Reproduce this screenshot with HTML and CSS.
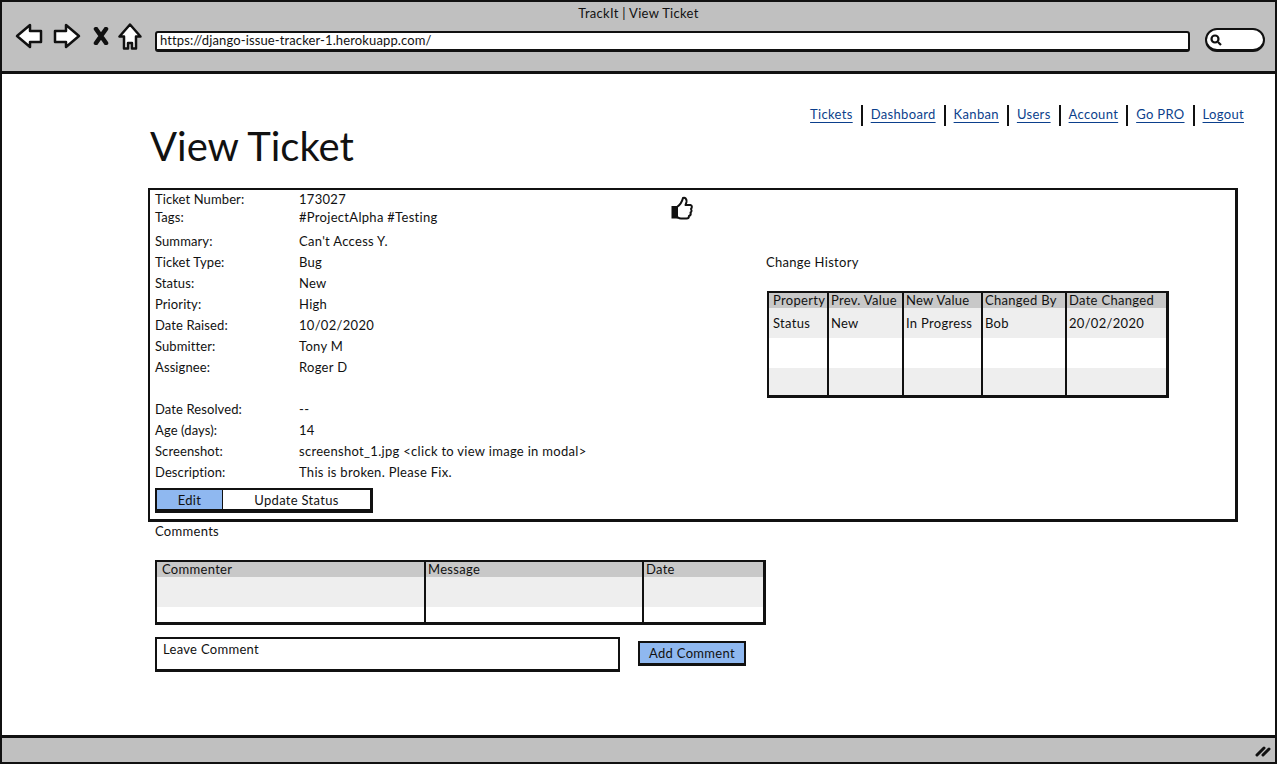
FILE: index.html
```html
<!doctype html>
<html lang="en">
    <head>
        <meta charset="UTF-8" />
        <title>TrackIt | View Ticket</title>
        <link rel="stylesheet" href="styles.css">
    </head>
    <body>
        <div class="window">
            <header class="chrome">
                <div class="chrome-title">TrackIt | View Ticket</div>
                <div class="chrome-bar">
                    <div class="chrome-icons">
                        <svg class="icon-back" viewBox="0 0 28 26"><path d="M2 13 L15 2 V8 H26 V19 H15 V24 Z" /></svg>
                        <svg class="icon-forward" viewBox="0 0 28 26"><path d="M26 13 L13 2 V8 H2 V19 H13 V24 Z" /></svg>
                        <svg class="icon-stop" viewBox="0 0 16 18"><path d="M3 2 L13 16 M13 2 L3 16" /></svg>
                        <svg class="icon-home" viewBox="0 0 24 27"><path d="M12 1.500 L1.500 13.500 H6 V25.500 H10 V20 H14 V25.500 H18 V13.500 H22.500 Z" /></svg>
                    </div>
                    <div class="url-box">https://django-issue-tracker-1.herokuapp.com/</div>
                    <div class="search-box">
                        <svg class="icon-search" viewBox="0 0 12 12"><circle cx="5" cy="5" r="3.500" /><line x1="8" y1="8" x2="11" y2="11" /></svg>
                    </div>
                </div>
            </header>

            <main class="page">
                <nav class="top-nav">
                    <a href="#">Tickets</a>
                    <a href="#">Dashboard</a>
                    <a href="#">Kanban</a>
                    <a href="#">Users</a>
                    <a href="#">Account</a>
                    <a href="#">Go PRO</a>
                    <a href="#">Logout</a>
                </nav>
                <h1>View Ticket</h1>

                <section class="ticket">
                    <div class="details">
                        <div class="row row-short"><span class="label">Ticket Number:</span><span>173027</span></div>
                        <div class="row row-tags"><span class="label">Tags:</span><span>#ProjectAlpha #Testing</span></div>
                        <div class="row"><span class="label">Summary:</span><span>Can't Access Y.</span></div>
                        <div class="row"><span class="label">Ticket Type:</span><span>Bug</span></div>
                        <div class="row"><span class="label">Status:</span><span>New</span></div>
                        <div class="row"><span class="label">Priority:</span><span>High</span></div>
                        <div class="row"><span class="label">Date Raised:</span><span>10/02/2020</span></div>
                        <div class="row"><span class="label">Submitter:</span><span>Tony M</span></div>
                        <div class="row row-gap"><span class="label">Assignee:</span><span>Roger D</span></div>
                        <div class="row"><span class="label">Date Resolved:</span><span>--</span></div>
                        <div class="row"><span class="label">Age (days):</span><span>14</span></div>
                        <div class="row"><span class="label">Screenshot:</span><span>screenshot_1.jpg &lt;click to view image in modal&gt;</span></div>
                        <div class="row"><span class="label">Description:</span><span>This is broken. Please Fix.</span></div>
                        <div class="btn-group">
                            <button class="btn-edit">Edit</button>
                            <button class="btn-status">Update Status</button>
                        </div>
                    </div>

                    <div class="like">
                        <svg viewBox="0 0 22 24">
                            <path class="thumb-cuff" d="M1.500 11 H6 V21.500 H1.500 Z" />
                            <path class="thumb-hand" d="M6 11 C9 9 11 6 12 2 C14 1 16 3 15.500 6 L14.500 9 H19.500 C21.500 9.500 21 12 20 13 C21 14.500 20.500 16 19.500 16.500 C20 18 19.500 19.500 18 20 C18 21.500 17 22.500 15.500 22.500 H10 C8 22.500 7 21.500 6 21 Z" />
                        </svg>
                    </div>

                    <div class="history">
                        <div class="history-title">Change History</div>
                        <table class="sketch-table history-table">
                            <colgroup>
                                <col class="h-col-1" /><col class="h-col-2" /><col class="h-col-3" /><col class="h-col-4" /><col />
                            </colgroup>
                            <thead>
                                <tr><th>Property</th><th>Prev. Value</th><th>New Value</th><th>Changed By</th><th>Date Changed</th></tr>
                            </thead>
                            <tbody>
                                <tr class="odd"><td>Status</td><td>New</td><td>In Progress</td><td>Bob</td><td>20/02/2020</td></tr>
                                <tr><td></td><td></td><td></td><td></td><td></td></tr>
                                <tr class="odd last"><td></td><td></td><td></td><td></td><td></td></tr>
                            </tbody>
                        </table>
                    </div>
                </section>

                <section class="comments">
                    <div class="comments-title">Comments</div>
                    <table class="sketch-table comments-table">
                        <colgroup>
                            <col class="c-col-1" /><col class="c-col-2" /><col />
                        </colgroup>
                        <thead>
                            <tr><th>Commenter</th><th>Message</th><th>Date</th></tr>
                        </thead>
                        <tbody>
                            <tr class="odd"><td></td><td></td><td></td></tr>
                            <tr class="last"><td></td><td></td><td></td></tr>
                        </tbody>
                    </table>
                    <div class="comment-form">
                        <div class="comment-input">Leave Comment</div>
                        <button class="btn-add">Add Comment</button>
                    </div>
                </section>
            </main>

            <footer class="status-bar">
                <svg class="icon-resize" viewBox="0 0 16 12"><path d="M2 10 L9 3 M8 10 L14 4" /></svg>
            </footer>
        </div>
    </body>
</html>
```

FILE: styles.css
```css
* {
    box-sizing: border-box;
}

body {
    margin: 0;
    background: white;
    color: #111;
    font-family: "Lato", "Liberation Sans", sans-serif;
    font-size: 13px;
    letter-spacing: 0.3px;
}

.window {
    display: flex;
    flex-direction: column;
    width: 1277px;
    height: 764px;
    border: 2px solid #111;
    overflow: hidden;
}

/* browser chrome */
.chrome {
    height: 72px;
    flex: none;
    background: #c0c0c0;
    border-bottom: 3px solid #111;
}

.chrome-title {
    height: 21px;
    padding-top: 3px;
    text-align: center;
    line-height: 17px;
}

.chrome-bar {
    display: flex;
    align-items: center;
    height: 26px;
    padding-left: 13px;
}

.chrome-icons {
    display: flex;
    align-items: center;
    width: 140px;
}

.chrome-icons svg {
    display: block;
    fill: white;
    stroke: #111;
    stroke-width: 2.500;
    stroke-linejoin: round;
}

.icon-back,
.icon-forward {
    width: 28px;
    height: 26px;
}

.icon-forward {
    margin-left: 10px;
}

.chrome-icons .icon-stop {
    width: 16px;
    height: 18px;
    margin-left: 12px;
    stroke-width: 4.500;
    stroke-linecap: round;
}

.icon-home {
    width: 24px;
    height: 27px;
    margin-left: 9px;
}

.url-box {
    width: 1035px;
    height: 21px;
    margin-top: 10px;
    padding-left: 3px;
    background: white;
    border: 2px solid #111;
    border-bottom-width: 3px;
    border-radius: 3px;
    line-height: 15px;
    letter-spacing: 0.12px;
}

.search-box {
    display: flex;
    align-items: center;
    width: 60px;
    height: 24px;
    margin-top: 8px;
    margin-left: 15px;
    padding-left: 3px;
    background: white;
    border: 2px solid #111;
    border-bottom-width: 3px;
    border-radius: 12px;
}

.icon-search {
    width: 12px;
    height: 12px;
    fill: none;
    stroke: #111;
    stroke-width: 2.200;
}

/* page content */
.page {
    flex: 1;
    padding: 31px 31px 0 146px;
}

.top-nav {
    display: flex;
    justify-content: flex-end;
    height: 21px;
    letter-spacing: 0.33px;
}

.top-nav a {
    display: block;
    padding: 0 8px;
    border-left: 2px solid #111;
    color: #0b3f8c;
    line-height: 19px;
    text-decoration: underline;
    text-underline-offset: 3px;
}

.top-nav a:first-child {
    border-left: none;
}

.top-nav a:last-child {
    padding-right: 0;
}

h1 {
    margin: 0;
    height: 62px;
    padding-left: 2px;
    font-size: 40px;
    font-weight: 400;
    line-height: 40px;
    letter-spacing: 0;
}

.ticket {
    display: flex;
    width: 1090px;
    height: 334px;
    padding: 1px 5px;
    border: 2px solid #111;
    border-bottom-width: 3px;
    border-right-width: 3px;
}

.details {
    width: 516px;
    flex: none;
}

.row {
    display: flex;
    height: 21px;
    line-height: 21px;
}

.row-short {
    height: 17px;
    line-height: 17px;
}

.row-tags {
    height: 23px;
    line-height: 19px;
}

.row-gap {
    height: 42px;
}

.label {
    width: 144px;
    flex: none;
    letter-spacing: 0.1px;
}

.btn-group {
    display: flex;
    width: 218px;
    height: 25px;
    margin-top: 5px;
    background: white;
    border: 2px solid #111;
    border-right-width: 3px;
    border-bottom-width: 4px;
}

button {
    padding: 0;
    border: none;
    color: #111;
    font-family: inherit;
    font-size: 13px;
    letter-spacing: inherit;
}

.btn-edit {
    width: 66px;
    background: #8fb8f0;
    border-right: 1px solid #111;
}

.btn-status {
    flex: 1;
    background: white;
}

.like {
    width: 95px;
    flex: none;
    padding-top: 5px;
}

.like svg {
    display: block;
    width: 22px;
    height: 24px;
}

.thumb-cuff {
    fill: #111;
    stroke: #111;
    stroke-width: 2;
}

.thumb-hand {
    fill: white;
    stroke: #111;
    stroke-width: 2;
    stroke-linejoin: round;
}

.history {
    padding-top: 61px;
}

.history-title {
    height: 20px;
    line-height: 20px;
}

.sketch-table {
    border-collapse: separate;
    border-spacing: 0;
    table-layout: fixed;
    border: 2px solid #111;
    border-right-width: 3px;
    border-bottom-width: 3px;
}

.sketch-table th {
    height: 15px;
    padding: 0 0 0 2px;
    background: #c8c8c8;
    font-weight: 400;
    line-height: 15px;
    text-align: left;
    overflow: hidden;
    white-space: nowrap;
}

.sketch-table td {
    height: 30px;
    padding: 0 0 0 2px;
    vertical-align: top;
    line-height: 30px;
    white-space: nowrap;
}

.sketch-table th + th,
.sketch-table td + td {
    border-left: 2px solid #111;
}

.sketch-table tr.odd td {
    background: #eeeeee;
}

.history-table {
    width: 402px;
    margin-top: 19px;
    margin-left: 1px;
}

.history-table th:first-child,
.history-table td:first-child {
    padding-left: 4px;
}

.history-table tr.last td {
    height: 27px;
}

.h-col-1 {
    width: 58px;
}

.h-col-2 {
    width: 75px;
}

.h-col-3 {
    width: 79px;
}

.h-col-4 {
    width: 84px;
}

.comments {
    padding-left: 7px;
}

.comments-title {
    height: 38px;
    padding-top: 1px;
    line-height: 17px;
}

.comments-table {
    width: 611px;
}

.comments-table th:first-child {
    padding-left: 5px;
}

.comments-table tr.last td {
    height: 15px;
}

.c-col-1 {
    width: 267px;
}

.c-col-2 {
    width: 218px;
}

.comment-form {
    display: flex;
    align-items: flex-start;
    margin-top: 12px;
}

.comment-input {
    width: 465px;
    height: 35px;
    padding-left: 6px;
    border: 2px solid #111;
    border-bottom-width: 3px;
    line-height: 20px;
}

.btn-add {
    width: 108px;
    height: 25px;
    margin-top: 4px;
    margin-left: 18px;
    background: #8fb8f0;
    border: 2px solid #111;
    border-bottom-width: 3px;
}

/* bottom bar */
.status-bar {
    display: flex;
    justify-content: flex-end;
    align-items: center;
    height: 27px;
    flex: none;
    padding-right: 4px;
    background: #c0c0c0;
    border-top: 3px solid #111;
}

.icon-resize {
    width: 16px;
    height: 12px;
    fill: none;
    stroke: #111;
    stroke-width: 3;
    stroke-linecap: round;
    margin-top: 2px;
}
```
